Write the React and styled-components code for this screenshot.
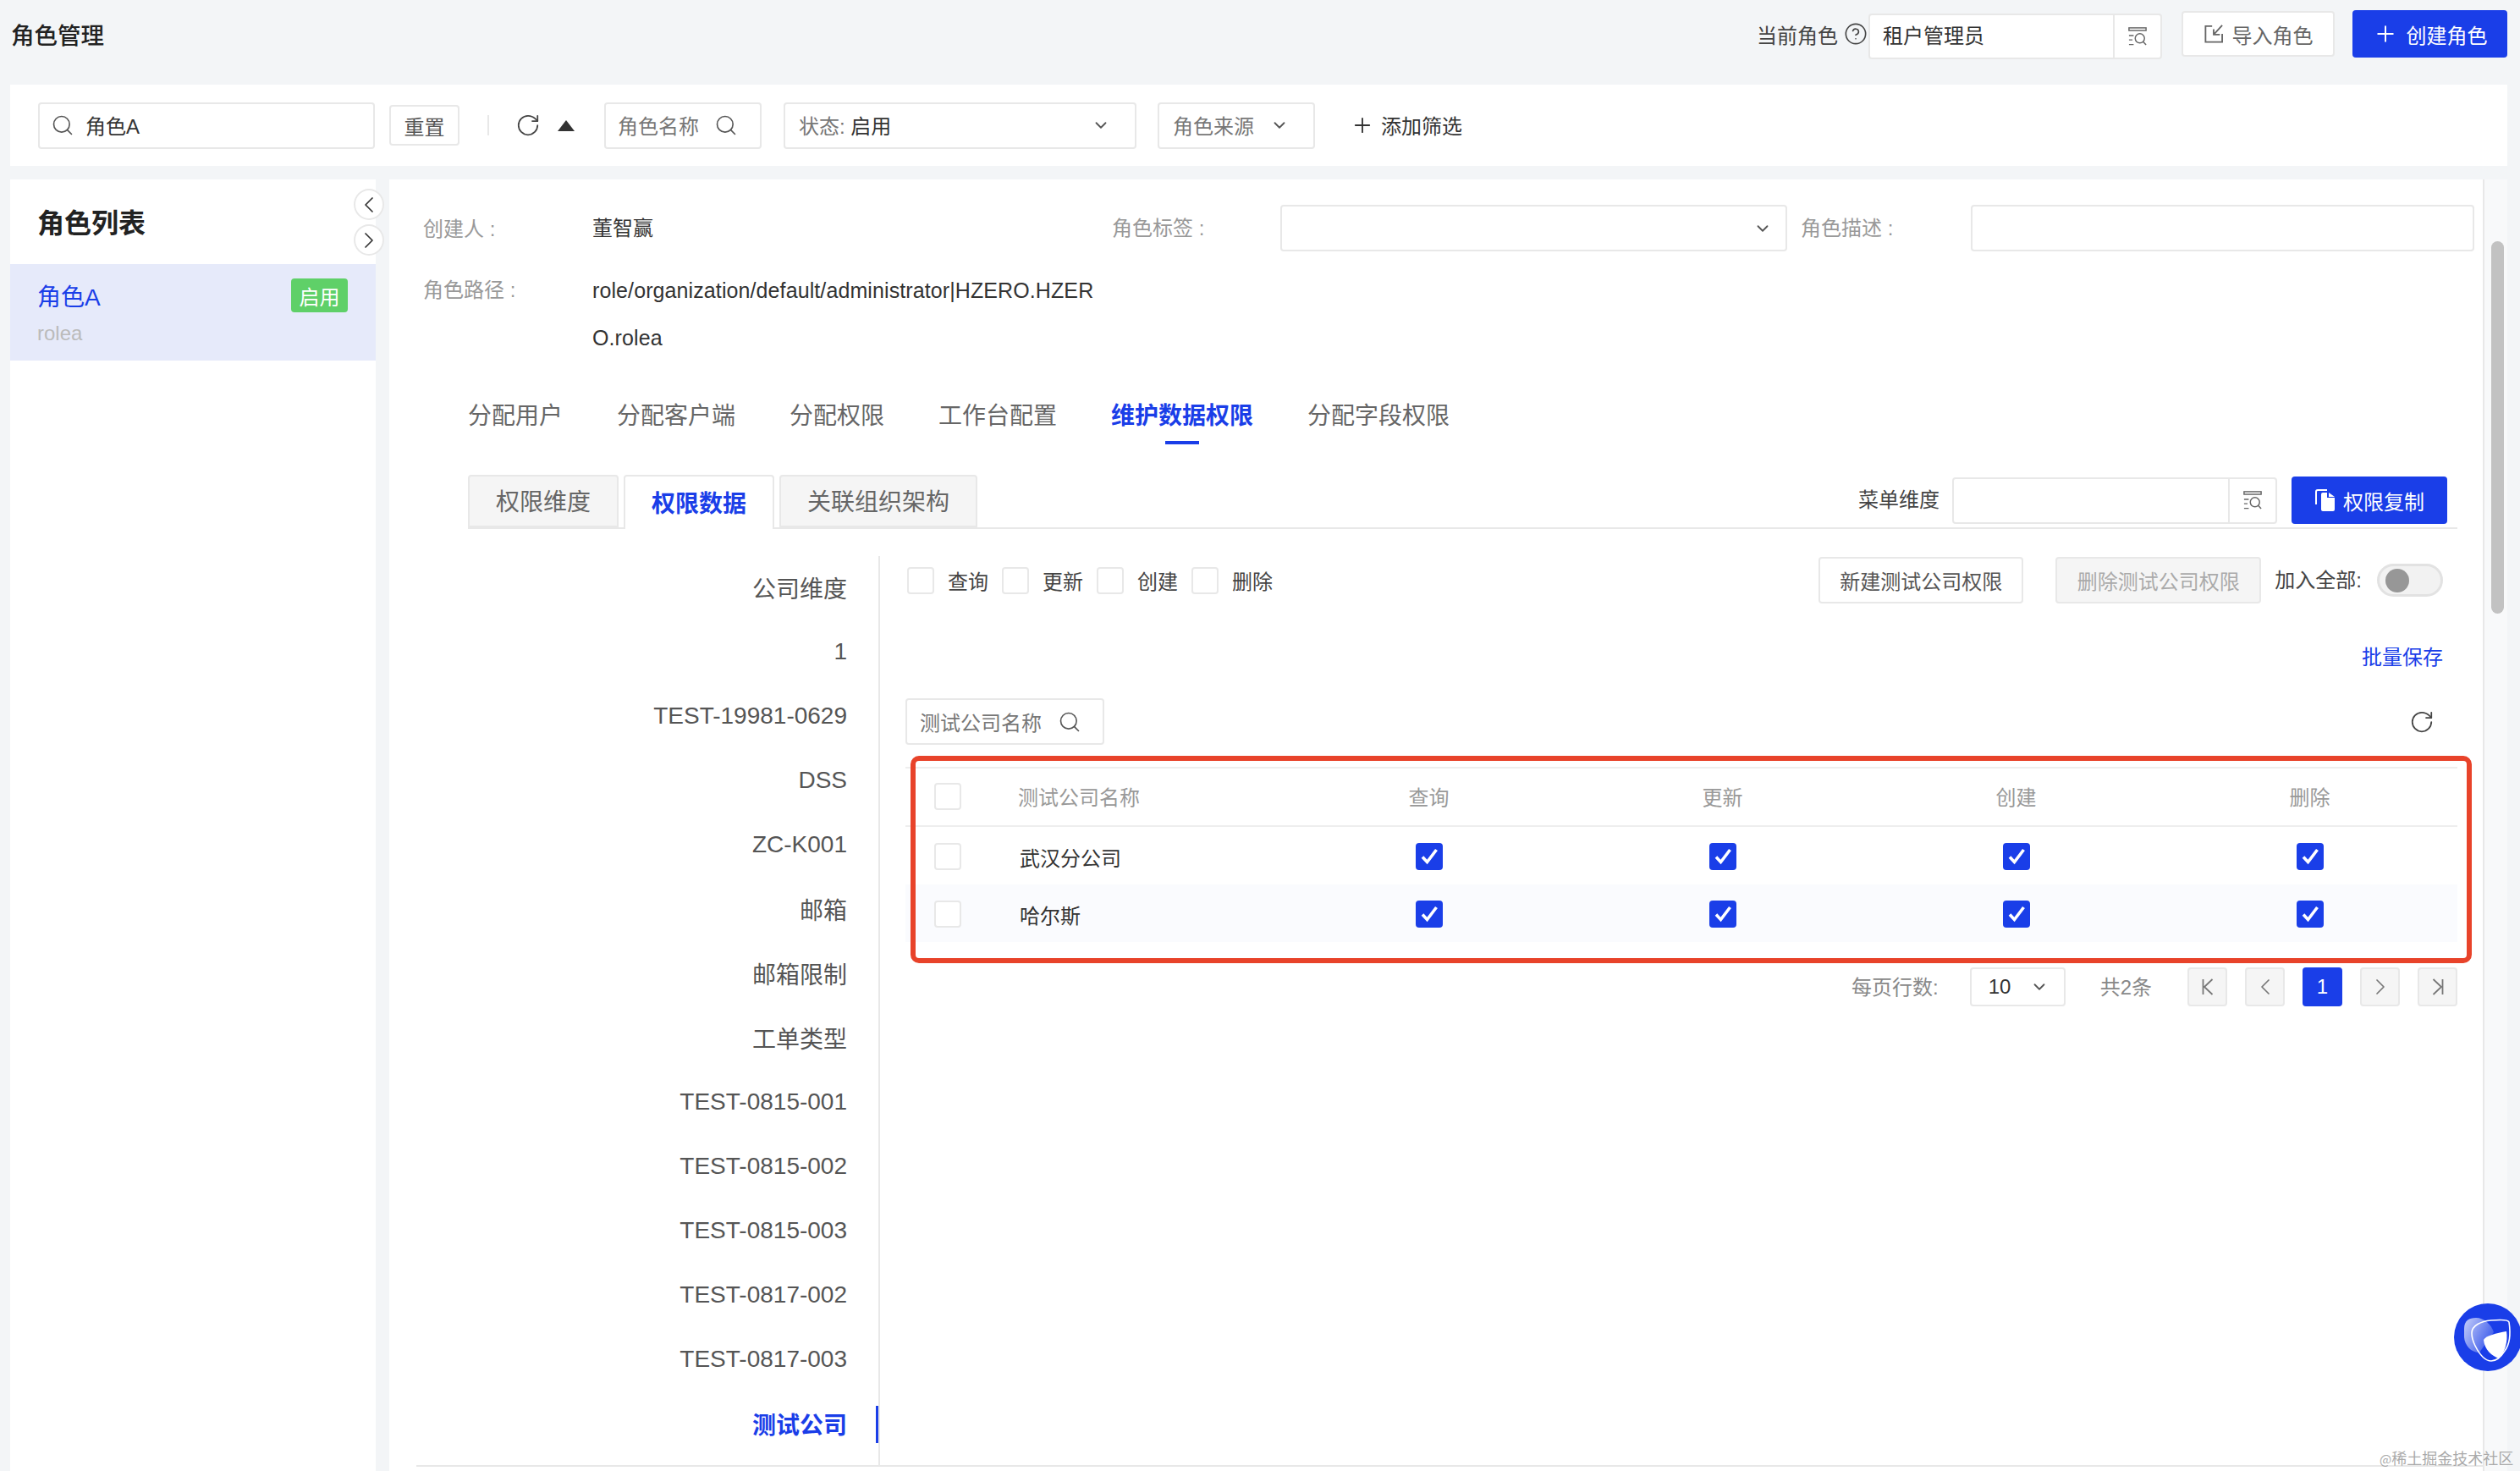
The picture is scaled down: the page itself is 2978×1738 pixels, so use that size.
import React from 'react'
import styled, { createGlobalStyle } from 'styled-components'
import {
  ChevronDown, ChevronLeft, ChevronRight,
  CircleHelp, Plus, RotateCw, Search,
} from 'lucide-react'

const BLUE = '#1a3ee8'
const LINE = '#e8e8e8'

const companies = [
  '公司维度', '1', 'TEST-19981-0629', 'DSS', 'ZC-K001', '邮箱', '邮箱限制', '工单类型',
  'TEST-0815-001', 'TEST-0815-002', 'TEST-0815-003', 'TEST-0817-002', 'TEST-0817-003', '测试公司',
]
const tabs = ['分配用户', '分配客户端', '分配权限', '工作台配置', '维护数据权限', '分配字段权限']
const subTabs = ['权限维度', '权限数据', '关联组织架构']
const perms = ['查询', '更新', '创建', '删除']
const rows = ['武汉分公司', '哈尔斯']

const LookupIcon = () => (
  <svg width="22" height="22" viewBox="0 0 24 24" fill="none" stroke="#666" strokeWidth="1.6">
    <rect x="1" y="1" width="22" height="3.4" />
    <path d="M1 11h6M1 16.5h4.5M1 22.5h6" />
    <circle cx="15" cy="14.5" r="6" />
    <path d="M19.5 19l3.5 4" />
  </svg>
)

const ImportIcon = () => (
  <svg width="24" height="22" viewBox="0 0 24 24" fill="none" stroke="#666" strokeWidth="2">
    <path d="M10 2H1.5V22.5H23V12" />
    <path d="M23 1L12 13M12 6V13H20" />
  </svg>
)

const CopyIcon = () => (
  <svg width="24" height="26" viewBox="0 0 24 26">
    <path d="M2 18V3a2 2 0 0 1 2-2h11" fill="none" stroke="#fff" strokeWidth="2" />
    <path d="M8 6a2 2 0 0 1 2-2h5v6h9v14a2 2 0 0 1-2 2H10a2 2 0 0 1-2-2zM17 4l7 5h-7z" fill="#fff" />
  </svg>
)

const CheckMark = () => (
  <svg width="32" height="32" viewBox="0 0 32 32" fill="none" stroke="#fff" strokeWidth="3.6">
    <path d="M8 16.5l5.5 6L24.5 8" />
  </svg>
)

const FirstPageIcon = () => (
  <svg width="24" height="24" viewBox="0 0 24 24" fill="none" stroke="currentColor" strokeWidth="1.8">
    <path d="M6.5 3v18M17.5 3L8 12l9.5 9" />
  </svg>
)

const LastPageIcon = () => (
  <svg width="24" height="24" viewBox="0 0 24 24" fill="none" stroke="currentColor" strokeWidth="1.8">
    <path d="M17.5 3v18M6.5 3L16 12l-9.5 9" />
  </svg>
)

const FabLogo = () => (
  <svg width="80" height="80" viewBox="0 0 80 80">
    <defs>
      <linearGradient id="fabGlow" x1="0" y1="0" x2="1" y2="0.6">
        <stop offset="0" stopColor="#fff" stopOpacity="0.75" />
        <stop offset="1" stopColor="#fff" stopOpacity="0.15" />
      </linearGradient>
    </defs>
    <circle cx="40" cy="40" r="40" fill={BLUE} />
    <path d="M12 30C12 20 18 17 26 17c10 0 18 8 21 17L30 58C20 58 13 50 12 40z" fill="url(#fabGlow)" />
    <path d="M35 43c3-5 15-8 27-10 2 12-2 25-9 32-8-3-17-10-18-22z" fill="#fff" />
    <path
      d="M21 35c0-9 11-14 23-15 11-1 20-1 21 2 2 13 1 26-5 34-5 8-10 12-16 12-8 0-15-10-19-18-3-6-4-10-4-15z"
      fill="none" stroke="#fff" strokeWidth="1.6"
    />
  </svg>
)

const App = () => {
  return (
    <Page>
      <GlobalStyle />
      <Header>
        <PageTitle>角色管理</PageTitle>
        <HeaderActions>
          <CurrentLabel>当前角色</CurrentLabel>
          <CircleHelp size={28} strokeWidth={1.4} color="#444" />
          <LookupBox $width={347} $height={54} $offset={6}>
            <LookupValue>租户管理员</LookupValue>
            <LookupBtn $width={56}><LookupIcon /></LookupBtn>
          </LookupBox>
          <OutlineBtn>
            <ImportIcon />
            导入角色
          </OutlineBtn>
          <PrimaryBtn $width={183}>
            <Plus size={30} strokeWidth={1.6} />
            创建角色
          </PrimaryBtn>
        </HeaderActions>
      </Header>

      <FilterBar>
        <SearchBox>
          <Search size={28} strokeWidth={1.4} color="#555" />
          <span>角色A</span>
        </SearchBox>
        <ResetBtn>重置</ResetBtn>
        <FilterDivider />
        <RotateCw size={30} strokeWidth={1.4} color="#444" />
        <Triangle />
        <FilterField $width={186} $gap={35} $pl={14} $pr={26}>
          <span>角色名称</span>
          <Search size={28} strokeWidth={1.4} color="#555" />
        </FilterField>
        <FilterField $width={417} $gap={26}>
          <span>状态: <Strong>启用</Strong></span>
          <ChevronDown size={22} strokeWidth={2} color="#555" />
        </FilterField>
        <FilterField $width={186} $gap={25}>
          <span>角色来源</span>
          <ChevronDown size={22} strokeWidth={2} color="#555" />
        </FilterField>
        <AddFilter>
          <Plus size={28} strokeWidth={1.6} />
          <span>添加筛选</span>
        </AddFilter>
      </FilterBar>

      <Body>
        <Sidebar>
          <SidebarTitle>角色列表</SidebarTitle>
          <RoleItem>
            <RoleTop>
              <RoleName>角色A</RoleName>
              <RoleBadge>启用</RoleBadge>
            </RoleTop>
            <RoleCode>rolea</RoleCode>
          </RoleItem>
          <CollapseBtns>
            <CircleBtn><ChevronLeft size={32} strokeWidth={1.3} /></CircleBtn>
            <CircleBtn><ChevronRight size={32} strokeWidth={1.3} /></CircleBtn>
          </CollapseBtns>
        </Sidebar>

        <Main>
          <Scroller>
            <InfoBlock>
              <InfoLeft>
                <InfoRow $height={55}>
                  <InfoLabel>创建人 :</InfoLabel>
                  <InfoValue>董智赢</InfoValue>
                </InfoRow>
                <InfoRow $top={17}>
                  <InfoLabel>角色路径 :</InfoLabel>
                  <PathValue>role/organization/default/administrator|HZERO.HZER<br />O.rolea</PathValue>
                </InfoRow>
              </InfoLeft>
              <InfoLabel $width={199}>角色标签 :</InfoLabel>
              <InfoSelect><ChevronDown size={22} strokeWidth={2} color="#555" /></InfoSelect>
              <InfoLabel $width={201}>角色描述 :</InfoLabel>
              <InfoInput />
            </InfoBlock>

            <TabBar>
              {tabs.map((t, i) => <TabItem key={t} $active={i === 4}>{t}</TabItem>)}
            </TabBar>

            <SubTabRow>
              <SubTabs>
                {subTabs.map((t, i) => <SubTab key={t} $active={i === 1}>{t}</SubTab>)}
              </SubTabs>
              <SubTabRight>
                <FieldLabel>菜单维度</FieldLabel>
                <LookupBox $width={384} $height={55}>
                  <LookupValue />
                  <LookupBtn $width={56}><LookupIcon /></LookupBtn>
                </LookupBox>
                <PrimaryBtn $width={184}>
                  <CopyIcon />
                  权限复制
                </PrimaryBtn>
              </SubTabRight>
            </SubTabRow>

            <Split>
              <NavList>
                {companies.map((c, i) => (
                  <NavItem key={c} $active={i === companies.length - 1}>{c}</NavItem>
                ))}
              </NavList>

              <Panel>
                <Toolbar>
                  <CheckGroup>
                    {perms.map(p => (
                      <CheckItem key={p}><Box />{p}</CheckItem>
                    ))}
                  </CheckGroup>
                  <ToolbarRight>
                    <GhostBtn>新建测试公司权限</GhostBtn>
                    <GhostBtn $disabled>删除测试公司权限</GhostBtn>
                    <FieldLabel>加入全部:</FieldLabel>
                    <Toggle><Knob /></Toggle>
                  </ToolbarRight>
                </Toolbar>

                <BatchRow><BatchLink>批量保存</BatchLink></BatchRow>

                <SearchRow>
                  <TableSearch>
                    <span>测试公司名称</span>
                    <Search size={28} strokeWidth={1.4} color="#555" />
                  </TableSearch>
                  <RotateCw size={30} strokeWidth={1.4} color="#444" />
                </SearchRow>

                <TableWrap>
                  <HeadRow>
                    <BoxCell><Box /></BoxCell>
                    <HeadName>测试公司名称</HeadName>
                    {perms.map(p => <HeadCell key={p}>{p}</HeadCell>)}
                  </HeadRow>
                  {rows.map((r, i) => (
                    <BodyRow key={r} $alt={i === 1}>
                      <BoxCell><Box /></BoxCell>
                      <NameCell>{r}</NameCell>
                      {perms.map(p => (
                        <CheckCell key={p}><CheckedBox><CheckMark /></CheckedBox></CheckCell>
                      ))}
                    </BodyRow>
                  ))}
                  <RedFrame />
                </TableWrap>

                <Pagination>
                  <PagerText>每页行数:</PagerText>
                  <PageSize>
                    <span>10</span>
                    <ChevronDown size={22} strokeWidth={2} color="#555" />
                  </PageSize>
                  <PagerTotal>共2条</PagerTotal>
                  <PagerBtns>
                    <PageBtn><FirstPageIcon /></PageBtn>
                    <PageBtn><ChevronLeft size={32} strokeWidth={1.3} /></PageBtn>
                    <PageBtn $active>1</PageBtn>
                    <PageBtn><ChevronRight size={32} strokeWidth={1.3} /></PageBtn>
                    <PageBtn><LastPageIcon /></PageBtn>
                  </PagerBtns>
                </Pagination>
              </Panel>
            </Split>
          </Scroller>
          <ScrollTrack><ScrollThumb /></ScrollTrack>
        </Main>
      </Body>

      <Fab><FabLogo /></Fab>
      <Watermark><WatermarkAt>@</WatermarkAt>稀土掘金技术社区</Watermark>
    </Page>
  )
}

export default App

const GlobalStyle = createGlobalStyle`
  html, body {
    margin:0;
    padding:0;
    background:#f3f5f7;
  }
  * {
    box-sizing:border-box;
  }
`

const Page = styled.div`
  position:relative;
  width:2978px;
  height:1738px;
  overflow:hidden;
  display:flex;
  flex-direction:column;
  padding:0 15px 0 12px;
  background:#f3f5f7;
  color:#333;
  font-family:"Liberation Sans", "Noto Sans CJK SC", sans-serif;
  font-size:24px;
`

const Header = styled.div`
  height:80px;
  margin-bottom:20px;
  display:flex;
  align-items:center;
  justify-content:space-between;
`

const PageTitle = styled.div`
  margin-left:1px;
  font-size:27.5px;
  font-weight:500;
  color:#222;
`

const HeaderActions = styled.div`
  display:flex;
  align-items:center;
`

const CurrentLabel = styled.span`
  margin-right:7px;
  color:#444;
`

const LookupBox = styled.div`
  display:flex;
  width:${p => p.$width}px;
  height:${p => p.$height}px;
  margin-top:${p => p.$offset || 0}px;
  margin-left:${p => (p.$offset ? 1 : 0)}px;
  background:#fff;
  border:2px solid ${LINE};
  border-radius:4px;
`

const LookupValue = styled.div`
  flex:1;
  padding-left:15px;
  line-height:50px;
  color:#333;
`

const LookupBtn = styled.div`
  width:${p => p.$width}px;
  display:flex;
  align-items:center;
  justify-content:center;
  border-left:2px solid ${LINE};
`

const OutlineBtn = styled.div`
  width:181px;
  height:54px;
  margin-left:23px;
  display:flex;
  align-items:center;
  justify-content:center;
  gap:10px;
  background:#fff;
  border:2px solid ${LINE};
  border-radius:4px;
  color:#666;
`

const PrimaryBtn = styled.div`
  width:${p => p.$width}px;
  height:56px;
  margin-left:${p => (p.$width === 183 ? 21 : 17)}px;
  display:flex;
  align-items:center;
  justify-content:center;
  gap:10px;
  background:${BLUE};
  border-radius:4px;
  color:#fff;
`

const FilterBar = styled.div`
  height:96px;
  display:flex;
  align-items:center;
  padding-left:33px;
  background:#fff;

  & > svg:nth-of-type(1) {
    margin-left:20px;
  }
`

const SearchBox = styled.div`
  width:398px;
  height:55px;
  display:flex;
  align-items:center;
  gap:13px;
  padding-left:13px;
  border:2px solid ${LINE};
  border-radius:4px;

  & > span {
    margin-bottom:2px;
  }
`

const ResetBtn = styled.div`
  width:83px;
  height:48px;
  margin-left:17px;
  display:flex;
  align-items:center;
  justify-content:center;
  border:2px solid ${LINE};
  border-radius:4px;
  color:#555;
`

const FilterDivider = styled.div`
  width:2px;
  height:24px;
  margin-left:33px;
  margin-right:11px;
  background:${LINE};
`

const Triangle = styled.div`
  width:0;
  height:0;
  margin-left:20px;
  border-left:10px solid transparent;
  border-right:10px solid transparent;
  border-bottom:13px solid #333;
`

const FilterField = styled.div`
  width:${p => p.$width}px;
  height:55px;
  margin-left:${p => p.$gap || 37}px;
  display:flex;
  align-items:center;
  justify-content:space-between;
  padding:0 ${p => p.$pr || 29}px 0 ${p => p.$pl || 16}px;
  border:2px solid ${LINE};
  border-radius:4px;
  color:#777;

  & > span {
    margin-bottom:2px;
  }
`

const Strong = styled.span`
  color:#333;
`

const AddFilter = styled.div`
  margin-left:42px;
  display:flex;
  align-items:center;
  gap:8px;
  color:#333;

  & > span {
    margin-bottom:2px;
  }
`

const Body = styled.div`
  flex:1;
  min-height:0;
  margin-top:16px;
  display:flex;
  gap:16px;
`

const Sidebar = styled.div`
  position:relative;
  width:432px;
  background:#fff;
`

const SidebarTitle = styled.div`
  height:100px;
  padding-left:32px;
  padding-bottom:2px;
  display:flex;
  align-items:center;
  font-size:32px;
  font-weight:700;
  color:#222;
`

const RoleItem = styled.div`
  height:114px;
  padding:17px 33px 0 32px;
  background:#e6eafa;
`

const RoleTop = styled.div`
  height:40px;
  display:flex;
  align-items:center;
  justify-content:space-between;
`

const RoleName = styled.span`
  font-size:28px;
  color:${BLUE};
`

const RoleBadge = styled.span`
  width:67px;
  height:40px;
  display:flex;
  align-items:center;
  justify-content:center;
  background:#5fd068;
  border-radius:4px;
  color:#fff;
`

const RoleCode = styled.div`
  margin-top:10px;
  line-height:30px;
  color:#bbb;
`

const CollapseBtns = styled.div`
  position:absolute;
  top:11px;
  left:406px;
  display:flex;
  flex-direction:column;
  gap:5px;
`

const CircleBtn = styled.div`
  width:36px;
  height:37px;
  display:flex;
  align-items:center;
  justify-content:center;
  background:#fff;
  border:2px solid ${LINE};
  border-radius:50%;
  color:#333;
`

const Main = styled.div`
  flex:1;
  min-width:0;
  display:flex;
  background:#fff;
`

const Scroller = styled.div`
  flex:1;
  min-width:0;
  margin-left:32px;
  height:1521px;
  display:flex;
  flex-direction:column;
  border-bottom:2px solid ${LINE};
`

const ScrollTrack = styled.div`
  width:29px;
  padding:73px 0 0 8px;
  background:#f8f9fa;
  border-left:2px solid ${LINE};
`

const ScrollThumb = styled.div`
  width:15px;
  height:440px;
  background:#c2c2c2;
  border-radius:8px;
`

const InfoBlock = styled.div`
  display:flex;
  align-items:flex-start;
  padding:30px 10px 0 8px;
`

const InfoLeft = styled.div`
  width:814px;
`

const InfoRow = styled.div`
  display:flex;
  align-items:${p => (p.$height ? 'center' : 'flex-start')};
  min-height:${p => p.$height || 0}px;
  margin-top:${p => p.$top || 0}px;
  line-height:56px;
`

const InfoLabel = styled.div`
  flex:none;
  width:${p => p.$width || 200}px;
  line-height:55px;
  color:#999;
`

const InfoValue = styled.div`
  color:#333;
  line-height:56px;
  white-space:nowrap;
`

const PathValue = styled(InfoValue)`
  font-size:25px;
  letter-spacing:0.1px;
`

const InfoSelect = styled.div`
  width:599px;
  height:55px;
  margin-right:16px;
  display:flex;
  align-items:center;
  justify-content:flex-end;
  padding-right:16px;
  border:2px solid ${LINE};
  border-radius:4px;
`

const InfoInput = styled.div`
  flex:1;
  height:55px;
  border:2px solid ${LINE};
  border-radius:4px;
`

const TabBar = styled.div`
  margin-top:45px;
  padding-left:61px;
  display:flex;
  gap:64px;
`

const TabItem = styled.div`
  position:relative;
  height:53px;
  line-height:40px;
  font-size:28px;
  font-weight:${p => (p.$active ? 600 : 400)};
  color:${p => (p.$active ? BLUE : '#666')};

  &::after {
    content:"";
    display:${p => (p.$active ? 'block' : 'none')};
    position:absolute;
    left:50%;
    bottom:0;
    width:40px;
    height:4px;
    margin-left:-20px;
    background:${BLUE};
  }
`

const SubTabRow = styled.div`
  margin:36px 30px 0 61px;
  height:64px;
  display:flex;
  justify-content:space-between;
  border-bottom:2px solid ${LINE};
`

const SubTabs = styled.div`
  display:flex;
  gap:6px;
`

const SubTab = styled.div`
  height:${p => (p.$active ? 64 : 62)}px;
  padding:0 31px 2px;
  display:flex;
  align-items:center;
  font-size:28px;
  font-weight:${p => (p.$active ? 600 : 400)};
  color:${p => (p.$active ? BLUE : '#666')};
  background:${p => (p.$active ? '#fff' : '#f5f5f5')};
  border:2px solid ${LINE};
  border-bottom:${p => (p.$active ? 'none' : `2px solid ${LINE}`)};
  border-radius:4px 4px 0 0;
`

const SubTabRight = styled.div`
  display:flex;
  align-items:center;
  height:56px;
  margin-top:2px;
  padding-right:12px;
`

const FieldLabel = styled.span`
  margin:0 15px 5px 0;
  color:#444;
`

const Split = styled.div`
  flex:1;
  min-height:0;
  margin:32px 0 0 61px;
  display:flex;
`

const NavList = styled.div`
  width:487px;
  border-right:2px solid ${LINE};
`

const NavItem = styled.div`
  position:relative;
  height:76px;
  padding:0 37px 3px 0;
  display:flex;
  align-items:center;
  justify-content:flex-end;
  font-size:28px;
  font-weight:${p => (p.$active ? 600 : 400)};
  color:${p => (p.$active ? BLUE : '#555')};

  &::after {
    content:"";
    display:${p => (p.$active ? 'block' : 'none')};
    position:absolute;
    right:0;
    top:16px;
    width:3px;
    height:44px;
    background:${BLUE};
  }
`

const Panel = styled.div`
  flex:1;
  min-width:0;
  padding:1px 30px 0 30px;
`

const Toolbar = styled.div`
  height:55px;
  padding:0 17px 0 2px;
  display:flex;
  align-items:center;
  justify-content:space-between;
`

const CheckGroup = styled.div`
  display:flex;
  gap:16px;
`

const CheckItem = styled.label`
  display:flex;
  align-items:center;
  gap:16px;
  color:#444;
`

const Box = styled.span`
  display:block;
  width:32px;
  height:32px;
  background:#fff;
  border:2px solid ${LINE};
  border-radius:4px;
`

const ToolbarRight = styled.div`
  display:flex;
  align-items:center;
`

const GhostBtn = styled.div`
  width:${p => (p.$disabled ? 243 : 242)}px;
  height:55px;
  margin-right:${p => (p.$disabled ? 16 : 38)}px;
  display:flex;
  align-items:center;
  justify-content:center;
  background:${p => (p.$disabled ? '#f5f5f5' : '#fff')};
  border:2px solid ${LINE};
  border-radius:4px;
  color:${p => (p.$disabled ? '#aaa' : '#555')};
`

const Toggle = styled.div`
  width:78px;
  height:39px;
  margin-left:3px;
  padding-left:7px;
  display:flex;
  align-items:center;
  background:#f2f2f2;
  border:3px solid #e2e2e2;
  border-radius:20px;
`

const Knob = styled.div`
  width:28px;
  height:28px;
  background:#979797;
  border-radius:50%;
`

const BatchRow = styled.div`
  margin-top:42px;
  height:38px;
  padding-right:17px;
  display:flex;
  align-items:center;
  justify-content:flex-end;
`

const BatchLink = styled.span`
  color:${BLUE};
`

const SearchRow = styled.div`
  margin-top:32px;
  height:55px;
  padding-right:27px;
  display:flex;
  align-items:center;
  justify-content:space-between;
`

const TableSearch = styled.div`
  width:235px;
  height:55px;
  padding:0 25px 0 15px;
  display:flex;
  align-items:center;
  justify-content:space-between;
  border:2px solid ${LINE};
  border-radius:4px;
  color:#777;
`

const TableWrap = styled.div`
  position:relative;
  margin-top:26px;
`

const tableColumns = '133px 312px repeat(4, 347px)'

const HeadRow = styled.div`
  display:grid;
  grid-template-columns:${tableColumns};
  height:71px;
  padding-bottom:2px;
  align-items:center;
  border-top:2px solid #eee;
  border-bottom:2px solid #eee;
  color:#999;
`

const BodyRow = styled.div`
  display:grid;
  grid-template-columns:${tableColumns};
  height:68px;
  padding-top:2px;
  align-items:center;
  background:${p => (p.$alt ? '#fafbfe' : '#fff')};
`

const BoxCell = styled.div`
  padding-left:34px;
`

const HeadName = styled.div`
  color:#999;
`

const HeadCell = styled.div`
  text-align:center;
`

const NameCell = styled.div`
  padding-left:2px;
  color:#333;
`

const CheckCell = styled.div`
  display:flex;
  justify-content:center;
`

const CheckedBox = styled.div`
  width:32px;
  height:32px;
  background:${BLUE};
  border-radius:4px;
`

const RedFrame = styled.div`
  position:absolute;
  top:-13px;
  left:6px;
  right:-17px;
  bottom:-25px;
  border:6px solid #e8432a;
  border-radius:10px;
  pointer-events:none;
`

const Pagination = styled.div`
  margin-top:30px;
  display:flex;
  align-items:center;
  justify-content:flex-end;
`

const PagerText = styled.span`
  margin:0 37px 4px 0;
  color:#888;
`

const PageSize = styled.div`
  width:113px;
  height:46px;
  padding:0 18px 0 20px;
  display:flex;
  align-items:center;
  justify-content:space-between;
  border:2px solid ${LINE};
  border-radius:4px;
  color:#333;
`

const PagerTotal = styled.span`
  margin:0 42px 4px 41px;
  color:#888;
`

const PagerBtns = styled.div`
  display:flex;
  gap:21px;
`

const PageBtn = styled.div`
  width:47px;
  height:46px;
  display:flex;
  align-items:center;
  justify-content:center;
  background:${p => (p.$active ? BLUE : '#f5f5f5')};
  border:2px solid ${p => (p.$active ? BLUE : LINE)};
  border-radius:4px;
  color:${p => (p.$active ? '#fff' : '#777')};
`

const Fab = styled.div`
  position:absolute;
  left:2900px;
  top:1540px;
  width:80px;
  height:80px;
`

const Watermark = styled.div`
  position:absolute;
  left:2812px;
  top:1708px;
  font-family:"Noto Sans CJK SC", sans-serif;
  font-size:18px;
  line-height:28px;
  color:#aaa;
  white-space:nowrap;
`

const WatermarkAt = styled.span`
  font-size:15px;
`
